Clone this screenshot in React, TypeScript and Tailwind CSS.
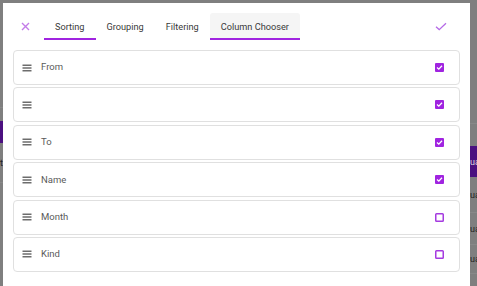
import React from "react";

const rows = [
  { label: "From", checked: true },
  { label: "", checked: true },
  { label: "To", checked: true },
  { label: "Name", checked: true },
  { label: "Month", checked: false },
  { label: "Kind", checked: false },
];

const tabs = ["Sorting", "Grouping", "Filtering", "Column Chooser"];

function DragIcon() {
  return (
    <svg width="10" height="8" viewBox="0 0 10 8" className="shrink-0">
      <rect x="0.5" y="0.6" width="9" height="1.2" fill="#4a4a4a" />
      <rect x="0.5" y="3.4" width="9" height="1.2" fill="#4a4a4a" />
      <rect x="0.5" y="6.2" width="9" height="1.2" fill="#4a4a4a" />
    </svg>
  );
}

function Checkbox({ checked }: { checked: boolean }) {
  if (checked) {
    return (
      <svg width="9" height="9" viewBox="0 0 9 9" className="shrink-0">
        <rect x="0" y="0" width="9" height="9" rx="1" fill="#a024e0" />
        <path d="M2 4.6 L3.8 6.2 L7 2.8" stroke="white" strokeWidth="1.3" fill="none" />
      </svg>
    );
  }
  return (
    <svg width="9" height="9" viewBox="0 0 9 9" className="shrink-0">
      <rect x="0.75" y="0.75" width="7.5" height="7.5" rx="0.8" fill="white" stroke="#a53be0" strokeWidth="1.5" />
    </svg>
  );
}

function BgRow({ h, purple, text, line = true }: { h: number; purple?: boolean; text?: string; line?: boolean }) {
  return (
    <div
      className={`shrink-0 flex items-center overflow-hidden text-[9px] leading-[12px] ${purple ? "bg-[#4b1080] text-[#ddd]" : "text-[#222]"} ${
        line ? "border-b border-[#888]" : ""
      }`}
      style={{ height: h }}
    >
      {text}
    </div>
  );
}

export default function App() {
  return (
    <div
      className="relative w-[477px] h-[286px] overflow-hidden bg-[#7f7f7f] flex justify-between"
      style={{ fontFamily: "Roboto, 'Liberation Sans', sans-serif" }}
    >
      {/* background page showing through the dim overlay */}
      <div className="w-[3px] flex flex-col">
        <BgRow h={108} />
        <BgRow h={13} line={false} />
        <BgRow h={22} purple line={false} />
        <BgRow h={40} text="t" />
      </div>
      <div className="w-[7px] flex flex-col whitespace-nowrap">
        <BgRow h={124} />
        <BgRow h={22} line={false} />
        <BgRow h={31} purple text="ua" line={false} />
        <BgRow h={36} text="ua" />
        <BgRow h={32} text="ua" />
        <BgRow h={29} text="ua" />
        <BgRow h={31} text="ua" />
      </div>

      {/* dialog */}
      <div className="absolute left-[3px] top-[3px] w-[467px] h-[290px] bg-white flex flex-col">
        <div className="flex items-start h-[47px] pt-[10px]">
          <div className="w-[41px] h-[27px] flex items-center justify-center pl-[3px]">
            <svg width="9" height="9" viewBox="0 0 9 9">
              <path d="M1 1 L8 8 M8 1 L1 8" stroke="#c37ce8" strokeWidth="1.4" />
            </svg>
          </div>
          <div className="flex">
            {tabs.map((t, i) => {
              const active = i === 3;
              const under = i === 0 || i === 3;
              return (
                <div
                  key={t}
                  className={`h-[27px] px-[11px] flex items-center text-[9.2px] text-[#3a3a3a] relative rounded-t-[3px] ${
                    active ? "bg-[#f5f5f5]" : ""
                  }`}
                >
                  {t}
                  {under && <div className="absolute left-0 right-0 bottom-0 h-[2px] bg-[#a024e0]" />}
                </div>
              );
            })}
          </div>
          <div className="flex-1" />
          <div className="w-[20px] h-[27px] flex items-center justify-center mr-[19px]">
            <svg width="12" height="9" viewBox="0 0 12 9">
              <path d="M1 4.8 L4.2 7.6 L11 1.2" stroke="#b56ae6" strokeWidth="1.3" fill="none" />
            </svg>
          </div>
        </div>
        <div className="flex flex-col gap-[2.4px] pl-[10px] w-[457px]">
          {rows.map((r, i) => (
            <div
              key={i}
              className="h-[35px] border border-[#e0e0e0] rounded-[4px] flex items-center pl-[8px] pr-[15px]"
            >
              <DragIcon />
              <span className="ml-[9px] text-[9.5px] text-[#5a5a5a] flex-1">{r.label}</span>
              <Checkbox checked={r.checked} />
            </div>
          ))}
        </div>
      </div>
    </div>
  );
}
